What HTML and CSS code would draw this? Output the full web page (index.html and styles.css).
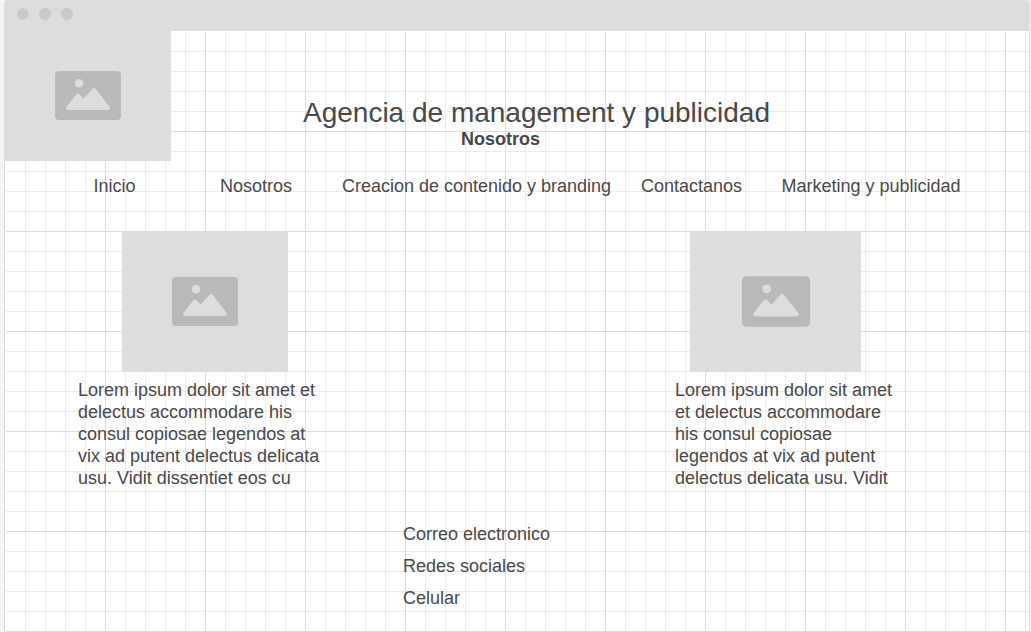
FILE: index.html
```html
<!DOCTYPE html>
<html lang="es">
<head>
<meta charset="utf-8">
<meta name="viewport" content="width=device-width, initial-scale=1">
<title>Agencia de management y publicidad</title>
<link rel="stylesheet" href="styles.css">
</head>
<body>
<svg class="symbols" aria-hidden="true">
  <symbol id="picture" viewBox="0 0 66 49">
    <rect width="66" height="49" rx="4" fill="#b9b9b9"/>
    <circle cx="24" cy="12.300" r="4.200" fill="#ddd"/>
    <path d="M13 37 L23 24.500 L28.500 30.500 L39 19 L53 37 Z" fill="#ddd" stroke="#ddd" stroke-width="4" stroke-linejoin="round"/>
  </symbol>
</svg>
<div class="window">
  <div class="window-bar">
    <span class="dot"></span><span class="dot"></span><span class="dot"></span>
  </div>
  <div class="page">
    <header class="header">
      <div class="placeholder logo"><svg class="picture" role="img" aria-label="Logo"><use href="#picture"/></svg></div>
      <div class="heading">
        <h1 class="title">Agencia de management y publicidad</h1>
        <h2 class="subtitle">Nosotros</h2>
      </div>
    </header>
    <nav class="nav">
      <a class="nav-link" href="#inicio">Inicio</a>
      <a class="nav-link" href="#nosotros">Nosotros</a>
      <a class="nav-link" href="#contenido">Creacion de contenido y branding</a>
      <a class="nav-link" href="#contactanos">Contactanos</a>
      <a class="nav-link" href="#marketing">Marketing y publicidad</a>
    </nav>
    <main class="features">
      <article class="feature">
        <div class="placeholder feature-image"><svg class="picture" role="img" aria-label="Imagen"><use href="#picture"/></svg></div>
        <p class="feature-text">Lorem ipsum dolor sit amet et delectus accommodare his consul copiosae legendos at vix ad putent delectus delicata usu. Vidit dissentiet eos cu</p>
      </article>
      <article class="feature feature-narrow">
        <div class="placeholder feature-image"><svg class="picture" role="img" aria-label="Imagen"><use href="#picture"/></svg></div>
        <p class="feature-text">Lorem ipsum dolor sit amet et delectus accommodare his consul copiosae legendos at vix ad putent delectus delicata usu. Vidit</p>
      </article>
    </main>
    <footer class="contact">
      <span>Correo electronico</span>
      <span>Redes sociales</span>
      <span>Celular</span>
    </footer>
  </div>
</div>
</body>
</html>
```

FILE: styles.css
```css
* {
  box-sizing: border-box;
}

body {
  margin: 0;
  background: #f4f4f4;
  color: #484848;
  font-family: "Liberation Sans", Arial, sans-serif;
  font-size: 18px;
  line-height: 22px;
}

.symbols {
  display: none;
}

.window {
  display: flex;
  flex-direction: column;
  min-height: 100vh;
  margin: 0 1px 0 4px;
}

.window-bar {
  display: flex;
  gap: 10px;
  height: 31px;
  padding: 8px 13px;
  border-radius: 4px 4px 0 0;
  background: #ddd;
}

.dot {
  width: 12px;
  height: 12px;
  border-radius: 50%;
  background: #c9c9c9;
}

/* Graph paper: strong lines every 100px, light ones every 20px.
   The first two layers clear the lines along the top and left edges. */
.page {
  flex: 1;
  border: solid #d8d8d8;
  border-width: 0 1px;
  background-color: #fff;
  background-image:
    linear-gradient(#fff, #fff),
    linear-gradient(#fff, #fff),
    linear-gradient(to right, #dcdcdc 1px, transparent 1px),
    linear-gradient(to bottom, #dcdcdc 1px, transparent 1px),
    linear-gradient(to right, #ebebeb 1px, transparent 1px),
    linear-gradient(to bottom, #ebebeb 1px, transparent 1px);
  background-size: 100% 1px, 1px 100%, 100px 100px, 100px 100px, 20px 20px, 20px 20px;
  background-repeat: no-repeat, no-repeat, repeat, repeat, repeat, repeat;
}

.header {
  display: flex;
}

.placeholder {
  display: flex;
  align-items: center;
  justify-content: center;
  padding-bottom: 2px;
  background: #ddd;
}

.picture {
  width: 66px;
  height: 49px;
}

.logo {
  width: 167px;
  height: 130px;
  margin-left: -1px;
}

.heading {
  flex: 1;
  padding: 67px 0 0 132px;
}

.title {
  margin: 0;
  font-size: 28px;
  font-weight: 400;
  line-height: 30px;
}

.subtitle {
  margin: 0;
  padding-left: 158px;
  font-size: 18px;
  line-height: 22px;
}

.nav {
  display: grid;
  grid-template-columns: 141fr 142fr 299fr 131fr 228fr;
  padding: 14px 44px 0 39px;
  text-align: center;
}

.nav-link {
  color: inherit;
  text-decoration: none;
  white-space: nowrap;
}

.features {
  display: flex;
  justify-content: space-between;
  padding: 35px 124px 0 73px;
}

.feature {
  width: 254px;
}

.feature-image {
  width: 166px;
  height: 140px;
  margin-left: 44px;
}

.feature-text {
  margin: 7px 0 0;
}

.feature-narrow {
  width: 230px;
}

.feature-narrow .feature-image {
  width: 171px;
  margin-left: 15px;
}

.feature-narrow .picture {
  width: 68px;
  height: 51px;
}

.contact {
  display: grid;
  gap: 10px;
  padding: 34px 0 20px 398px;
}
```
